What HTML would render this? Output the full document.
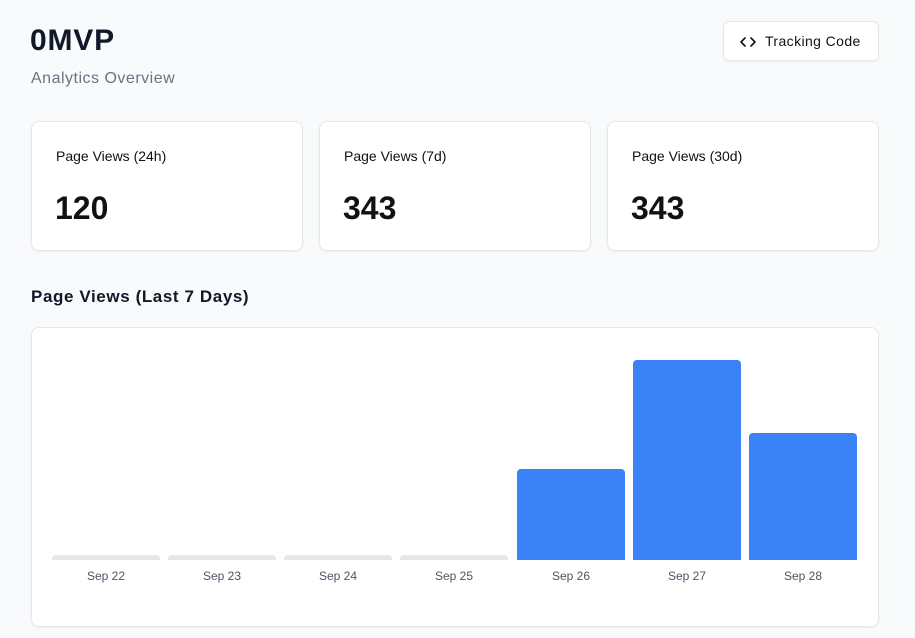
<!DOCTYPE html>
<html><head><style>
*{box-sizing:border-box;margin:0;padding:0}
body{width:915px;height:638px;background:#f9fafb;font-family:"Liberation Sans",sans-serif;color:#111827;position:relative;overflow:hidden}
.a{position:absolute}
.card{position:absolute;background:#fff;border:1px solid #e5e7eb;border-radius:8px;box-shadow:0 1px 2px rgba(0,0,0,.05)}
.lbl{position:absolute;left:24px;top:26px;font-size:14px;color:#111}
.num{position:absolute;left:23px;top:68px;font-size:32px;font-weight:bold;color:#111}
.bar{position:absolute;width:108px;border-radius:4px 4px 0 0}
.g{background:#e5e7eb;top:555px;height:5px}
.b{background:#3b82f6}
.d{position:absolute;width:108px;text-align:center;font-size:12px;color:#4b5563;top:569px}
</style></head><body>
<div class="a" style="left:30px;top:24px;font-size:30px;font-weight:bold;letter-spacing:0.8px">0MVP</div>
<div class="a" style="left:31px;top:70px;font-size:16px;color:#6b7280;letter-spacing:0.5px">Analytics Overview</div>
<div class="card" style="left:723px;top:21px;width:156px;height:40px;border-radius:6px">
<svg class="a" style="left:16px;top:13px" width="16" height="14" viewBox="0 0 16 14"><path d="M5 3L1 7l4 4M11 3l4 4-4 4" fill="none" stroke="#111" stroke-width="1.6" stroke-linecap="round" stroke-linejoin="round"/></svg>
<div class="a" style="left:41px;top:11px;font-size:14px;color:#111;letter-spacing:0.4px">Tracking Code</div></div>
<div class="card" style="left:31px;top:121px;width:272px;height:130px"><div class="lbl">Page Views (24h)</div><div class="num">120</div></div>
<div class="card" style="left:319px;top:121px;width:272px;height:130px"><div class="lbl">Page Views (7d)</div><div class="num">343</div></div>
<div class="card" style="left:607px;top:121px;width:272px;height:130px"><div class="lbl">Page Views (30d)</div><div class="num">343</div></div>
<div class="a" style="left:31px;top:287px;font-size:17px;font-weight:bold;letter-spacing:0.6px">Page Views (Last 7 Days)</div>
<div class="card" style="left:31px;top:327px;width:848px;height:300px"></div>
<div class="bar g" style="left:52px"></div>
<div class="bar g" style="left:168px"></div>
<div class="bar g" style="left:284px"></div>
<div class="bar g" style="left:400px"></div>
<div class="bar b" style="left:517px;top:469px;height:91px"></div>
<div class="bar b" style="left:633px;top:360px;height:200px"></div>
<div class="bar b" style="left:749px;top:433px;height:127px"></div>
<div class="d" style="left:52px">Sep 22</div>
<div class="d" style="left:168px">Sep 23</div>
<div class="d" style="left:284px">Sep 24</div>
<div class="d" style="left:400px">Sep 25</div>
<div class="d" style="left:517px">Sep 26</div>
<div class="d" style="left:633px">Sep 27</div>
<div class="d" style="left:749px">Sep 28</div>
</body></html>
